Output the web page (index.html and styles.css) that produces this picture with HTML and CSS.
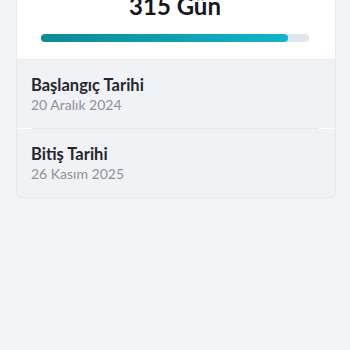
FILE: index.html
```html
<!DOCTYPE html>
<html lang="tr">
<head>
<meta charset="utf-8">
<link rel="stylesheet" href="styles.css">
</head>
<body>
<div class="page">
  <div class="card">
    <div class="summary">
      <div class="total">315 Gün</div>
      <div class="track"><div class="fill" style="width: 92%"></div></div>
    </div>
    <div class="row">
      <div class="label">Başlangıç Tarihi</div>
      <div class="value">20 Aralık 2024</div>
    </div>
    <div class="divider"><div class="divider-line"></div></div>
    <div class="row">
      <div class="label">Bitiş Tarihi</div>
      <div class="value">26 Kasım 2025</div>
    </div>
  </div>
</div>
</body>
</html>
```
FILE: styles.css
```css
html, body {
  margin: 0;
  padding: 0;
  background: #f3f4f8;
  font-family: Lato, "Noto Sans", sans-serif;
}
.page {
  padding: 0 14px 0 16px;
}
.card {
  margin-top: -10px;
  background: #f1f2f6;
  border: 1px solid #e6e8ee;
  border-top: none;
  border-radius: 0 0 7px 7px;
  box-shadow: 0 1px 2px rgba(0,0,0,0.03);
  overflow: hidden;
}
.summary {
  background: #ffffff;
  padding: 0 26px 17px 24px;
  border-bottom: 1px solid #e8eaf0;
}
.total {
  font-size: 24px;
  line-height: 32px;
  font-weight: 700;
  color: #16171c;
  text-align: center;
  margin-bottom: 12px;
}
.track {
  height: 8px;
  background: #e2e5ec;
  border-radius: 4px;
}
.fill {
  height: 8px;
  border-radius: 4px;
  background: linear-gradient(90deg, #0c8a95, #12b4c9);
}
.row {
  padding: 15px 14px 14px 14px;
}
.label {
  font-size: 16.5px;
  line-height: 21px;
  font-weight: 700;
  color: #25262e;
}
.value {
  font-size: 14px;
  line-height: 18px;
  color: #8e9199;
}
.divider {
  height: 1px;
  background: #ffffff;
}
.divider-line {
  height: 1px;
  margin: 0 16px 0 15px;
  background: #e4e6eb;
}
```
